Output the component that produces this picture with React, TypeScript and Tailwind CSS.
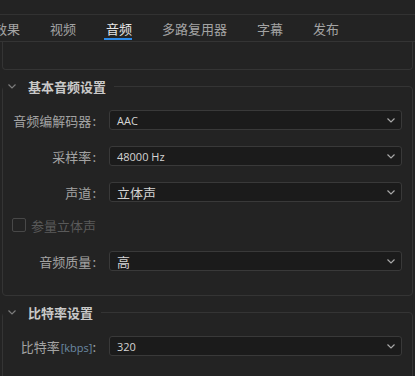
const cjk = { fontFamily: '"Noto Sans CJK SC", "Noto Sans", sans-serif' };
const latin = { fontFamily: '"Open Sans", "Liberation Sans", "Noto Sans CJK SC", sans-serif' };

const tabs = ["效果", "视频", "音频", "多路复用器", "字幕", "发布"];

const Chevron = ({ className }: { className: string }) => (
  <svg width="8" height="5" viewBox="0 0 8 5" className={className}>
    <polyline points="0.5,0.5 4,4 7.5,0.5" fill="none" stroke="currentColor" strokeWidth="1.2" />
  </svg>
);

const Select = ({ value, cn }: { value: string; cn?: boolean }) => (
  <div className="flex-1 h-[20px] flex items-center justify-between bg-[#1b1b1b] border border-[#393939] rounded-[3px] pl-[7px] pr-[6px]">
    <span
      className={cn ? "text-[13px] text-[#d4d4d4] leading-none" : "text-[11px] text-[#d4d4d4] leading-none"}
      style={cn ? cjk : latin}
    >
      {value}
    </span>
    <Chevron className="text-[#a8a8a8]" />
  </div>
);

const Row = ({ label, value, cn, extra }: { label: string; value: string; cn?: boolean; extra?: string }) => (
  <div className="flex items-center h-[20px]">
    <div className="w-[94px] pr-[1px] text-right text-[13px] text-[#a3a3a3] leading-none whitespace-nowrap" style={cjk}>
      {label}
      {extra && (
        <span className="text-[11px] text-[#6b8aa3] ml-[1px]" style={latin}>
          {extra}
        </span>
      )}
      <span className={extra ? "" : "ml-[1px]"}>:</span>
    </div>
    <div className="ml-[12px] flex-1 flex">
      <Select value={value} cn={cn} />
    </div>
  </div>
);

const Section = ({ title, children }: { title: string; children: React.ReactNode }) => (
  <fieldset className="mx-[2px] mt-[8px] border border-[#343434] rounded-[4px]">
    <legend className="h-[16px] flex items-center pl-[5px] pr-[8px]">
      <Chevron className="text-[#7c7c7c]" />
      <span className="ml-[12px] text-[13px] font-bold text-[#c9c9c9] leading-none" style={cjk}>
        {title}
      </span>
    </legend>
    <div className="pt-[16px] pb-[24px] pr-[10px]">{children}</div>
  </fieldset>
);

export default function App() {
  return (
    <div className="w-[415px] h-[376px] overflow-hidden bg-[#232323]" style={cjk}>
      <div className="h-[15px] border-b border-[#323232]" />
      <div className="h-[27px] border-b border-[#343434] flex gap-[30px] -ml-[6px]">
        {tabs.map((t) => {
          const active = t === "音频";
          return (
            <div key={t} className="relative h-full flex items-center">
              <span className={active ? "text-[13px] text-[#e6e6e6] leading-none" : "text-[13px] text-[#a3a3a3] leading-none"}>
                {t}
              </span>
              {active && <div className="absolute left-[-2px] right-0 bottom-[1px] h-[2px] bg-[#2d8ceb]" />}
            </div>
          );
        })}
      </div>
      <div className="mx-[2px] h-[28px] border-x border-b border-[#343434] rounded-b-[4px]" />

      <Section title="基本音频设置">
        <Row label="音频编解码器" value="AAC" />
        <div className="mt-[16px]">
          <Row label="采样率" value="48000 Hz" />
        </div>
        <div className="mt-[16px]">
          <Row label="声道" value="立体声" cn />
        </div>
        <div className="mt-[16px] h-[14px] flex items-center ml-[9px]">
          <div className="w-[14px] h-[14px] border-[1.5px] border-[#484848] rounded-[2px]" />
          <span className="ml-[5px] text-[13px] text-[#5a5a5a] leading-none">参量立体声</span>
        </div>
        <div className="mt-[19px]">
          <Row label="音频质量" value="高" cn />
        </div>
      </Section>

      <Section title="比特率设置">
        <Row label="比特率" extra="[kbps]" value="320" />
      </Section>
    </div>
  );
}
